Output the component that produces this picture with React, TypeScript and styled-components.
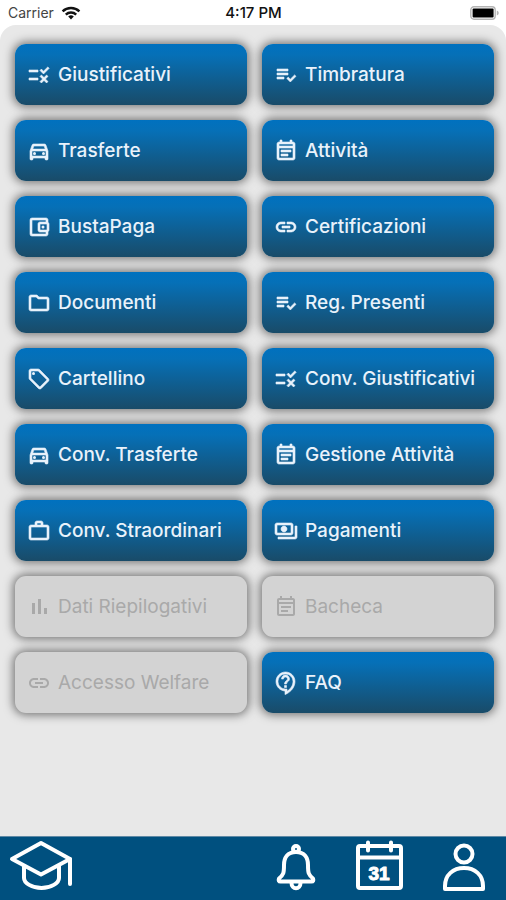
import React from 'react';
import styled, { createGlobalStyle, css } from 'styled-components';
import {
  MdRule,
  MdPlaylistAddCheck,
  MdOutlineDirectionsCar,
  MdOutlineEventNote,
  MdOutlineAccountBalanceWallet,
  MdLink,
  MdOutlineFolder,
  MdOutlineSell,
  MdWorkOutline,
  MdOutlinePayments,
  MdOutlineContactSupport,
} from 'react-icons/md';

const GlobalStyle = createGlobalStyle`
  * { box-sizing: border-box; }
  body {
    margin: 0;
    background: #ffffff;
    font-family: Inter, "Liberation Sans", sans-serif;
  }
`;

const Screen = styled.div`
  display: flex;
  flex-direction: column;
  min-height: 100vh;
`;

const StatusBar = styled.header`
  display: grid;
  grid-template-columns: 1fr auto 1fr;
  align-items: center;
  height: 25px;
  padding: 0 7px 0 8px;
  font-size: 14px;
  line-height: 16px;
  color: #444444;
`;

const Carrier = styled.div`
  display: flex;
  align-items: center;
  gap: 7px;
`;

const Clock = styled.time`
  font-size: 15px;
  font-weight: 500;
  color: #111111;
`;

const Battery = styled.svg`
  justify-self: end;
`;

const Panel = styled.main`
  flex: 1;
  padding: 19px 12px 24px 15px;
  background: #e8e8e8;
  border-radius: 16px 16px 0 0;
`;

const MenuGrid = styled.div`
  display: grid;
  grid-template-columns: 1fr 1fr;
  gap: 15px;
`;

const MenuButton = styled.button`
  display: flex;
  align-items: center;
  gap: 7px;
  height: 61px;
  padding: 0 12px;
  border: 0;
  border-radius: 11px;
  background: linear-gradient(180deg, #0071bf 0%, #0670b7 18%, #194b68 100%);
  box-shadow: 0 0 10px 2px rgba(0, 0, 0, 0.5);
  color: #e9f2fb;
  font-family: inherit;
  font-size: 19px;
  font-weight: 500;
  line-height: 24px;
  text-align: left;
  white-space: nowrap;
  cursor: pointer;

  svg {
    flex: none;
    width: 24px;
    height: 24px;
  }

  svg path:not([fill='none']) {
    stroke: currentColor;
    stroke-width: 0.6;
  }

  ${(p) =>
    p.disabled &&
    css`
      background: #d3d3d3;
      color: #a9a9a9;
      font-weight: 400;
      cursor: default;

      svg path:not([fill='none']) {
        stroke-width: 0;
      }
    `}
`;

const BottomNav = styled.nav`
  display: flex;
  align-items: center;
  height: 64px;
  padding: 0 20px 5px 8px;
  background: #00507f;
  border-top: 1px solid #5f89a5;
`;

const NavButton = styled.button<{ $first?: boolean }>`
  display: flex;
  padding: 0;
  border: 0;
  background: none;
  color: #ffffff;
  cursor: pointer;
  margin-right: ${(p) => (p.$first ? 'auto' : '0')};
`;

const NavActions = styled.div`
  display: flex;
  align-items: center;
  gap: 38px;
`;

const NavIcon = styled.svg<{ $stroke: number }>`
  display: block;
  fill: none;
  stroke: currentColor;
  stroke-width: ${(p) => p.$stroke};
  stroke-linecap: round;
  stroke-linejoin: round;
`;

const DayNumber = styled.text`
  fill: currentColor;
  stroke: currentColor;
  stroke-width: 1;
  font-size: 19px;
  font-weight: 700;
  text-anchor: middle;
`;

function SlimBars() {
  return (
    <svg viewBox="0 0 24 24" fill="currentColor" aria-hidden="true">
      <path d="M5 8h3v11H5zM11 4h3v15h-3zM17 13h3v6h-3z" />
    </svg>
  );
}

interface MenuEntry {
  label: string;
  icon: React.ComponentType;
  disabled?: boolean;
}

const entries: MenuEntry[] = [
  { label: 'Giustificativi', icon: MdRule },
  { label: 'Timbratura', icon: MdPlaylistAddCheck },
  { label: 'Trasferte', icon: MdOutlineDirectionsCar },
  { label: 'Attività', icon: MdOutlineEventNote },
  { label: 'BustaPaga', icon: MdOutlineAccountBalanceWallet },
  { label: 'Certificazioni', icon: MdLink },
  { label: 'Documenti', icon: MdOutlineFolder },
  { label: 'Reg. Presenti', icon: MdPlaylistAddCheck },
  { label: 'Cartellino', icon: MdOutlineSell },
  { label: 'Conv. Giustificativi', icon: MdRule },
  { label: 'Conv. Trasferte', icon: MdOutlineDirectionsCar },
  { label: 'Gestione Attività', icon: MdOutlineEventNote },
  { label: 'Conv. Straordinari', icon: MdWorkOutline },
  { label: 'Pagamenti', icon: MdOutlinePayments },
  { label: 'Dati Riepilogativi', icon: SlimBars, disabled: true },
  { label: 'Bacheca', icon: MdOutlineEventNote, disabled: true },
  { label: 'Accesso Welfare', icon: MdLink, disabled: true },
  { label: 'FAQ', icon: MdOutlineContactSupport },
];

export default function App() {
  return (
    <>
      <GlobalStyle />
      <Screen>
        <StatusBar>
          <Carrier>
            <span>Carrier</span>
            <svg width="20" height="14" viewBox="0 0 20 14" fill="none" stroke="#111" strokeWidth="2.4" aria-hidden="true">
              <path d="M1.6 5.4a12 12 0 0 1 16.8 0" />
              <path d="M4.8 8.7a7.4 7.4 0 0 1 10.4 0" />
              <path d="M10 13.4 7.2 10.6a4 4 0 0 1 5.6 0z" fill="#111" stroke="none" />
            </svg>
          </Carrier>
          <Clock>4:17 PM</Clock>
          <Battery width="29" height="14" viewBox="0 0 29 14" aria-hidden="true">
            <rect x="0.8" y="0.8" width="24.4" height="12.4" rx="3.2" fill="#fff" stroke="#b4b4b4" strokeWidth="1.4" />
            <rect x="2.6" y="2.6" width="21" height="8.8" rx="1" fill="#000" />
            <path d="M26.8 4.6q2 .8 2 2.4t-2 2.4z" fill="#b4b4b4" />
          </Battery>
        </StatusBar>

        <Panel>
          <MenuGrid>
            {entries.map(({ label, icon: Icon, disabled }) => (
              <MenuButton key={label} type="button" disabled={disabled}>
                <Icon />
                {label}
              </MenuButton>
            ))}
          </MenuGrid>
        </Panel>

        <BottomNav>
          <NavButton $first type="button" aria-label="Formazione">
            <NavIcon $stroke={4} width="66" height="54" viewBox="0 0 66 54">
              <path d="M4 20 33 4l29 16-29 15.500z" />
              <path d="M16 27v12c0 5 8 10 17.500 10S51 44 51 39V27" />
              <path d="M62 20v25" />
            </NavIcon>
          </NavButton>
          <NavActions>
            <NavButton type="button" aria-label="Notifiche">
              <NavIcon $stroke={4} width="40" height="50" viewBox="0 0 40 50">
                <circle cx="20" cy="8" r="3" />
                <path d="M20 11C11.500 11 8 17 8 24c0 8-.5 10-5 13.500q-1 3 1.500 3h31q2.500 0 1.500-3c-4.500-3.500-5-5.500-5-13.500 0-7-3.500-13-12-13z" />
                <path d="M15.500 42c0 7 9 7 9 0" />
              </NavIcon>
            </NavButton>
            <NavButton type="button" aria-label="Calendario">
              <NavIcon $stroke={4} width="50" height="52" viewBox="0 0 50 52">
                <rect x="4" y="6" width="43" height="42" rx="2" />
                <path d="M4 17.500h43M14 2.500v8M37 2.500v8" />
                <DayNumber x="25" y="40">31</DayNumber>
              </NavIcon>
            </NavButton>
            <NavButton type="button" aria-label="Profilo">
              <NavIcon $stroke={4} width="44" height="50" viewBox="0 0 44 50">
                <circle cx="22" cy="13" r="8.500" />
                <path d="M3 48v-3c0-11 8-18 19-18s19 7 19 18v3z" />
              </NavIcon>
            </NavButton>
          </NavActions>
        </BottomNav>
      </Screen>
    </>
  );
}
